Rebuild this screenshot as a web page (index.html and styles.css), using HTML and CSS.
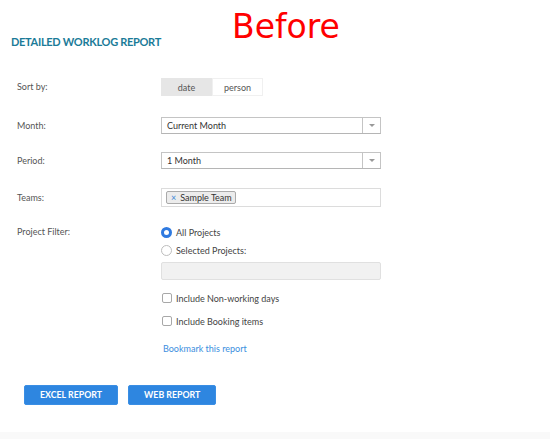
FILE: index.html
```html
<!DOCTYPE html>
<html>
<head>
<meta charset="utf-8">
<link rel="stylesheet" href="styles.css">
</head>
<body>
<div class="page">
  <div class="before">Before</div>
  <h1 class="title">DETAILED WORKLOG REPORT</h1>
  <div class="form">
    <div class="row row-sort">
      <div class="label">Sort by:</div>
      <div class="seg">
        <span class="seg-item active">date</span>
        <span class="seg-item">person</span>
      </div>
    </div>
    <div class="row row-month">
      <div class="label">Month:</div>
      <div class="select">
        <span class="select-text">Current Month</span>
        <span class="select-arrow"><span class="tri"></span></span>
      </div>
    </div>
    <div class="row row-period">
      <div class="label">Period:</div>
      <div class="select">
        <span class="select-text">1 Month</span>
        <span class="select-arrow"><span class="tri"></span></span>
      </div>
    </div>
    <div class="row row-teams">
      <div class="label">Teams:</div>
      <div class="tags">
        <span class="tag"><span class="tag-x">×</span>Sample Team</span>
      </div>
    </div>
    <div class="row row-filter">
      <div class="label label-filter">Project Filter:</div>
      <div class="options">
        <div class="opt"><span class="radio checked"></span>All Projects</div>
        <div class="opt opt-second"><span class="radio"></span>Selected Projects:</div>
        <div class="disabled-input"></div>
        <div class="opt opt-check1"><span class="check"></span>Include Non-working days</div>
        <div class="opt opt-check2"><span class="check"></span>Include Booking items</div>
        <a class="bookmark" href="#">Bookmark this report</a>
      </div>
    </div>
  </div>
  <div class="buttons">
    <button class="btn">EXCEL REPORT</button>
    <button class="btn">WEB REPORT</button>
  </div>
</div>
</body>
</html>
```
FILE: styles.css
```css
html, body {
  margin: 0;
  padding: 0;
}
body {
  background: #f9f9f9;
  font-family: Lato, "Open Sans", sans-serif;
  color: #555;
}
.page {
  position: relative;
  height: 432px;
  background: #fff;
  padding-top: 35px;
  box-sizing: border-box;
}
.before {
  position: absolute;
  left: 232px;
  top: 8px;
  font-family: "DejaVu Sans", sans-serif;
  font-size: 33px;
  line-height: 38px;
  color: #ff0000;
}
.title {
  margin: 0 0 0 11px;
  font-size: 11px;
  line-height: 14px;
  font-weight: 700;
  color: #1b7b98;
  letter-spacing: -0.3px;
}
.form {
  margin: 29px 0 0 17px;
  display: flex;
  flex-direction: column;
}
.row {
  display: flex;
  align-items: center;
}
.label {
  width: 144px;
  flex: none;
  font-size: 9px;
  line-height: 14px;
  color: #555;
}
.row-sort { height: 18px; }
.row-month { margin-top: 21px; height: 17px; }
.row-period { margin-top: 18px; height: 17px; }
.row-teams { margin-top: 19px; height: 19px; }
.row-filter { margin-top: 18px; align-items: flex-start; }

.seg {
  display: flex;
  height: 18px;
}
.seg-item {
  width: 51px;
  box-sizing: border-box;
  display: flex;
  align-items: center;
  justify-content: center;
  font-size: 9px;
  color: #555;
  background: #fff;
  border: 1px solid #f0f0f0;
}
.seg-item.active {
  background: #e6e6e6;
  border-color: #e6e6e6;
}

.select {
  width: 220px;
  height: 17px;
  box-sizing: border-box;
  display: flex;
  align-items: center;
  border: 1px solid #c4c4c4;
  border-bottom-color: #b5b5b5;
  background: #fff;
}
.select-text {
  flex: 1;
  padding-left: 5px;
  font-size: 9px;
  color: #333;
}
.select-arrow {
  width: 17px;
  height: 100%;
  border-left: 1px solid #c4c4c4;
  display: flex;
  align-items: center;
  justify-content: center;
}
.tri {
  width: 0;
  height: 0;
  border-left: 3px solid transparent;
  border-right: 3px solid transparent;
  border-top: 3px solid #999;
}

.tags {
  width: 220px;
  height: 19px;
  box-sizing: border-box;
  border: 1px solid #dcdcdc;
  display: flex;
  align-items: center;
  padding-left: 4px;
}
.tag {
  height: 13px;
  box-sizing: border-box;
  display: flex;
  align-items: center;
  padding: 0 3px 0 4px;
  background: #ececec;
  border: 1px solid #aaa;
  border-radius: 2px;
  font-size: 9px;
  color: #333;
}
.tag-x {
  color: #3b86d6;
  font-size: 9px;
  margin-right: 4px;
}

.label-filter {
  line-height: 14px;
}
.options {
  width: 220px;
  display: flex;
  flex-direction: column;
}
.opt {
  display: flex;
  align-items: center;
  gap: 4px;
  height: 14px;
  font-size: 9px;
  color: #444;
}
.opt-second { margin-top: 4px; }
.opt-check1 { margin-top: 11px; padding-left: 1px; }
.opt-check2 { margin-top: 9px; padding-left: 1px; }
.radio {
  width: 11px;
  height: 11px;
  box-sizing: border-box;
  border-radius: 50%;
  border: 1px solid #bdbdbd;
  background: #fff;
}
.radio.checked {
  border: 3.5px solid #2f7ae0;
  background: #fff;
}
.check {
  width: 10px;
  height: 10px;
  box-sizing: border-box;
  border: 1px solid #a8a8a8;
  border-radius: 2px;
  background: #fff;
}
.disabled-input {
  margin-top: 5px;
  height: 18px;
  box-sizing: border-box;
  background: #f1f1f1;
  border: 1px solid #e0e0e0;
  border-radius: 2px;
}
.bookmark {
  margin-top: 14px;
  padding-left: 2px;
  font-size: 9px;
  line-height: 14px;
  color: #3b8ede;
  text-decoration: none;
}

.buttons {
  margin: 29px 0 0 24px;
  display: flex;
  gap: 10px;
}
.btn {
  height: 20px;
  padding: 0 15px;
  box-sizing: border-box;
  border: 1px solid #3a8ee4;
  border-radius: 2px;
  background: #2e86e0;
  color: #fff;
  font-family: Lato, sans-serif;
  font-size: 8.8px;
  font-weight: 700;
  line-height: 18px;
}
```
